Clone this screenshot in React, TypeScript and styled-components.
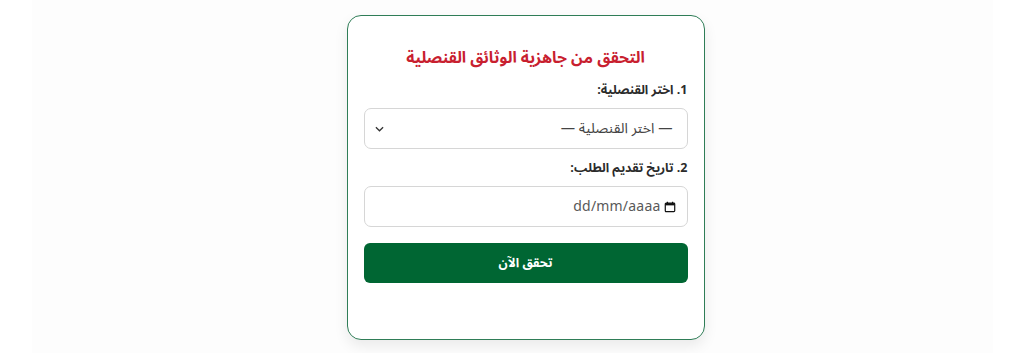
import styled, { createGlobalStyle } from 'styled-components';

const GlobalStyle = createGlobalStyle`
  html, body {
    margin: 0;
    padding: 0;
    background: #ffffff;
    font-family: "Noto Sans Arabic", "Noto Kufi Arabic", "Noto Sans", "DejaVu Sans", sans-serif;
  }
  * {
    box-sizing: border-box;
  }
`;

export default function App() {
  return (
    <>
      <GlobalStyle />
      <Page>
        <Card dir="rtl">
          <Title>التحقق من جاهزية الوثائق القنصلية</Title>

          <Label>1. اختر القنصلية:</Label>
          <SelectWrap>
            <Select defaultValue="">
              <option value="">— اختر القنصلية —</option>
            </Select>
            <Chevron viewBox="0 0 10 6" aria-hidden="true">
              <path d="M1 1l4 4 4-4" fill="none" stroke="#333" strokeWidth="1.4" />
            </Chevron>
          </SelectWrap>

          <Label>2. تاريخ تقديم الطلب:</Label>
          <DateField dir="ltr">
            <DateText>dd/mm/aaaa</DateText>
            <CalendarIcon viewBox="0 0 14 14" aria-hidden="true">
              <rect x="1.5" y="2.5" width="11" height="10" rx="1" fill="none" stroke="#111" strokeWidth="1.4" />
              <rect x="1.5" y="2.5" width="11" height="2.6" fill="#111" />
              <path d="M4 1v2M10 1v2" stroke="#111" strokeWidth="1.4" />
            </CalendarIcon>
          </DateField>

          <SubmitButton type="button">تحقق الآن</SubmitButton>
        </Card>
      </Page>
    </>
  );
}

const Page = styled.div`
  margin: 0 31px 0 32px;
  height: 353px;
  background: #fdfdfd;
  display: flex;
  justify-content: center;
  align-items: flex-start;
  padding-top: 15px;
  padding-left: 26px;
`;

const Card = styled.div`
  width: 358px;
  background: #ffffff;
  border: 1px solid #2f7d57;
  border-radius: 14px;
  box-shadow: 0 6px 14px rgba(0, 0, 0, 0.08);
  padding: 30px 16px 56px;
  display: flex;
  flex-direction: column;
`;

const Title = styled.h2`
  margin: 0 0 10px;
  text-align: center;
  color: #c8202f;
  font-size: 15.8px;
  font-weight: 700;
  line-height: 24px;
`;

const Label = styled.div`
  font-size: 12.5px;
  font-weight: 700;
  color: #2b2b2b;
  line-height: 21px;
  margin-bottom: 7px;
`;

const SelectWrap = styled.div`
  position: relative;
  margin-bottom: 9px;
`;

const Select = styled.select`
  width: 100%;
  height: 41px;
  appearance: none;
  border: 1px solid #d6d6d6;
  border-radius: 7px;
  background: #ffffff;
  padding: 0 14px 0 36px;
  font-family: inherit;
  font-size: 14.3px;
  color: #444;
  direction: rtl;
`;

const Chevron = styled.svg`
  position: absolute;
  left: 11px;
  top: 18px;
  width: 9px;
  height: 6px;
  pointer-events: none;
`;

const DateField = styled.div`
  height: 41px;
  border: 1px solid #d6d6d6;
  border-radius: 7px;
  background: #ffffff;
  display: flex;
  align-items: center;
  justify-content: flex-end;
  gap: 3px;
  padding: 0 11px;
  margin-bottom: 16px;
`;

const DateText = styled.span`
  font-size: 14px;
  color: #595959;
  letter-spacing: 0.2px;
`;

const CalendarIcon = styled.svg`
  width: 12px;
  height: 12px;
`;

const SubmitButton = styled.button`
  height: 40px;
  border: none;
  border-radius: 6px;
  background: #006633;
  color: #ffffff;
  font-family: inherit;
  font-size: 12.5px;
  font-weight: 700;
  cursor: pointer;
`;
